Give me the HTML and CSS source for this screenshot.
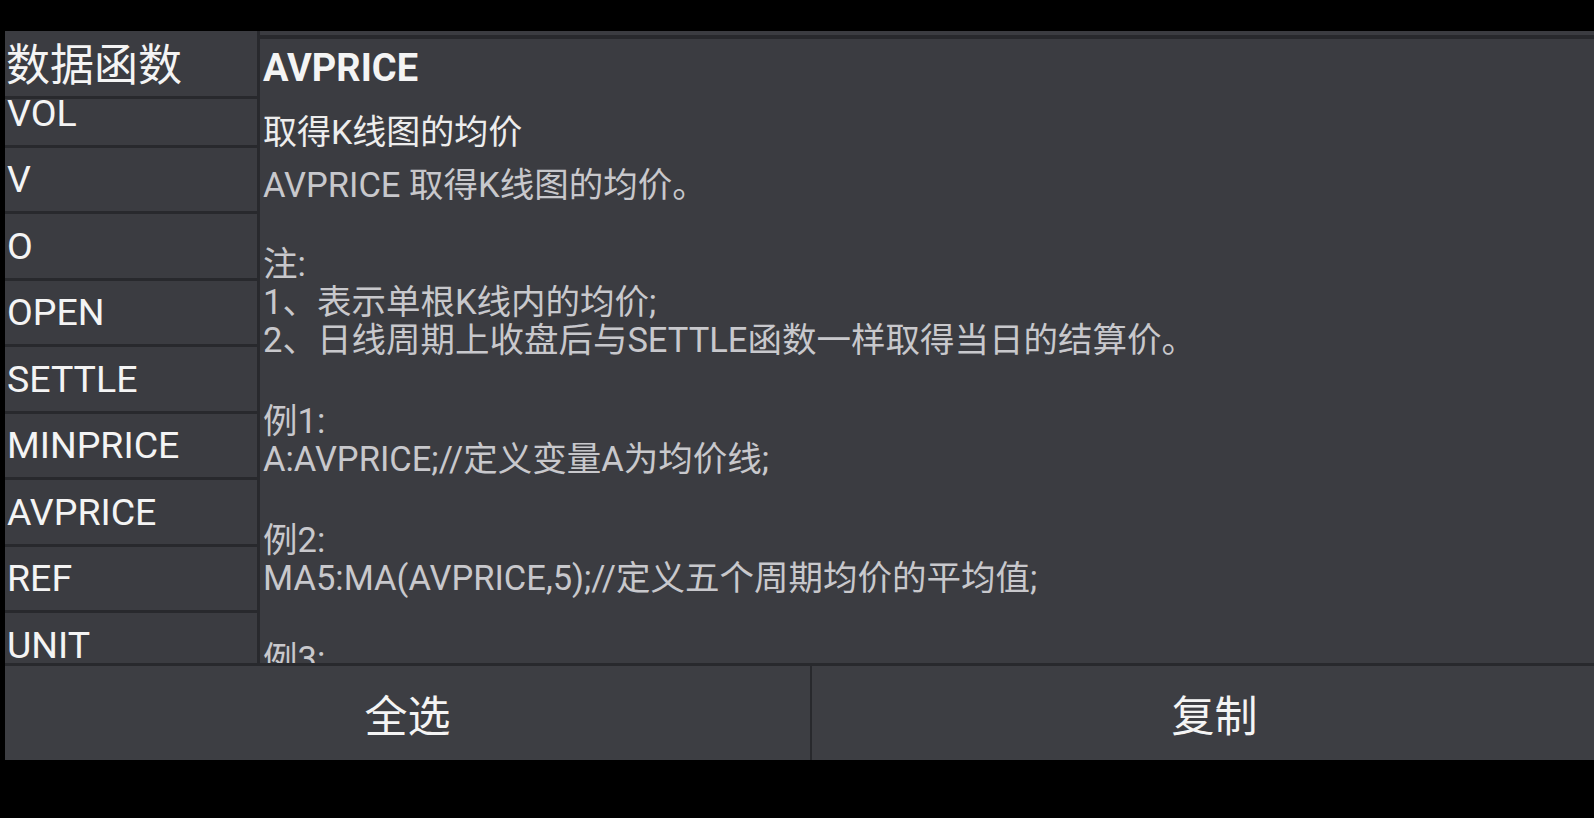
FILE: index.html
```html
<!DOCTYPE html>
<html lang="zh-CN">

<head>
    <meta charset="UTF-8">
    <meta name="viewport" content="width=device-width, initial-scale=1.0">
    <title>数据函数</title>
    <link rel="stylesheet" href="styles.css">
</head>

<body>
    <div class="panel">
        <div class="main">
            <div class="side">
                <div class="side-head">数据函数</div>
                <div class="side-list">
                    <div class="side-scroll">
                        <div class="side-item">VOL</div>
                        <div class="side-item">V</div>
                        <div class="side-item">O</div>
                        <div class="side-item">OPEN</div>
                        <div class="side-item">SETTLE</div>
                        <div class="side-item">MINPRICE</div>
                        <div class="side-item">AVPRICE</div>
                        <div class="side-item">REF</div>
                        <div class="side-item">UNIT</div>
                    </div>
                </div>
            </div>

            <div class="detail">
                <div class="detail-inner">
                    <div class="detail-title">AVPRICE</div>
                    <div class="detail-sub">取得K线图的均价</div>
                    <div class="detail-body">
                        <p>AVPRICE 取得K线图的均价。</p>
                        <p>注:<br>1、表示单根K线内的均价;<br>2、日线周期上收盘后与SETTLE函数一样取得当日的结算价。</p>
                        <p>例1:<br>A:AVPRICE;//定义变量A为均价线;</p>
                        <p>例2:<br>MA5:MA(AVPRICE,5);//定义五个周期均价的平均值;</p>
                        <p>例3:</p>
                    </div>
                </div>
            </div>
        </div>

        <div class="actions">
            <button class="action">全选</button>
            <button class="action">复制</button>
        </div>
    </div>
</body>

</html>
```

FILE: styles.css
```css
:root {
    --bg: #000;
    --panel: #3b3c41;
    --line: #28292d;
    --text: #f4f4f4;
    --muted: #c8c8cc;
    --font: Roboto, "Noto Sans CJK SC", sans-serif;
}

body {
    margin: 0;
    background-color: var(--bg);
    font-family: var(--font);
    color: var(--text);
    overflow: hidden;
}

.panel {
    width: 1612px;
    height: 729px;
    margin: 31px 0 0 5px;
    background-color: var(--panel);
    display: flex;
    flex-direction: column;
}

.main {
    display: flex;
    height: 632px;
}

.side {
    width: 252px;
    display: flex;
    flex-direction: column;
    border-right: 3px solid var(--line);
}

.side-head {
    height: 68px;
    box-sizing: border-box;
    flex-shrink: 0;
    border-bottom: 3px solid var(--line);
    font-size: 44px;
    display: flex;
    align-items: center;
    padding: 0 0 3px 1px;
}

.side-list {
    flex: 1;
    overflow: hidden;
}

/* list is scrolled a little, first row is cut */
.side-scroll {
    margin-top: -18px;
}

.side-item {
    height: 66.5px;
    box-sizing: border-box;
    border-bottom: 3px solid var(--line);
    font-size: 37.5px;
    display: flex;
    align-items: center;
    padding-left: 2px;
}

.detail {
    flex: 1;
    padding-top: 4px;
    overflow: hidden;
}

.detail-inner {
    height: 100%;
    box-sizing: border-box;
    border-top: 4px solid var(--line);
    padding: 5px 0 0 3px;
    overflow: hidden;
}

.detail-title {
    font-size: 38px;
    font-weight: bold;
    line-height: 48px;
}

.detail-sub {
    font-size: 34px;
    line-height: 48px;
    margin-top: 16px;
    color: #ededed;
}

.detail-body {
    font-size: 34.5px;
    line-height: 38px;
    color: var(--muted);
    white-space: nowrap;
}

.detail-body p {
    margin: 43px 0 0;
}

.detail-body p:first-child {
    margin-top: 10px;
}

.detail-body p:nth-child(2) {
    margin-top: 41px;
}

.actions {
    flex: 1;
    display: flex;
    border-top: 3px solid var(--line);
    background-color: #3d3e43;
}

.action {
    width: 805px;
    flex-shrink: 0;
    background: none;
    border: none;
    color: var(--text);
    font-family: inherit;
    font-size: 43px;
    padding: 0;
}

.action + .action {
    flex: 1;
    border-left: 2px solid var(--line);
}
```
